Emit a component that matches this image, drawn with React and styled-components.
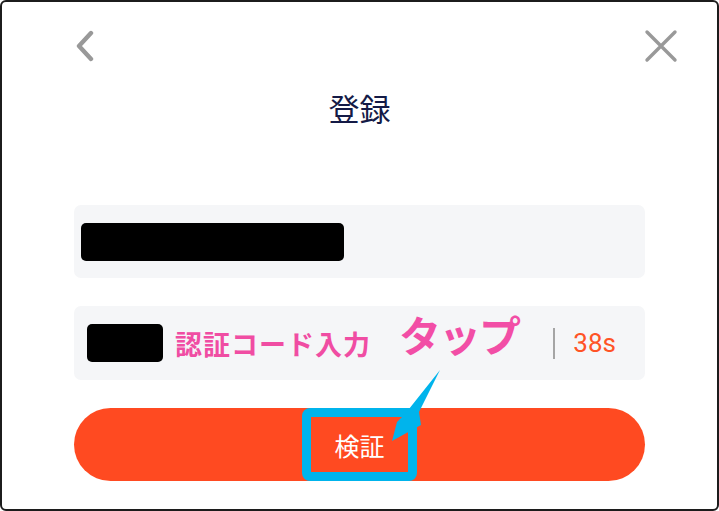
import React from 'react'
import styled, { createGlobalStyle } from 'styled-components'

const GlobalStyle = createGlobalStyle`
    html, body {
        margin: 0;
        padding: 0;
        background: #ffffff;
    }
    body {
        font-family: "Noto Sans CJK JP", "Noto Sans", sans-serif;
    }
`

const Frame = styled.div`
    position: relative;
    width: 719px;
    height: 511px;
    box-sizing: border-box;
    border: 2px solid #1c1c1c;
    border-radius: 6px;
    background: #ffffff;
    overflow: hidden;
`

const Header = styled.header`
    display: flex;
    align-items: center;
    justify-content: space-between;
    height: 32px;
    margin-top: 28px;
    padding: 0 39px 0 71px;
`

const IconButton = styled.button`
    display: flex;
    align-items: center;
    justify-content: center;
    padding: 0;
    border: 0;
    background: none;
    color: #999999;
`

const Title = styled.h1`
    margin: 26px 0 0;
    font-size: 31px;
    line-height: 40px;
    font-weight: 400;
    text-align: center;
    color: #141a46;
`

const Form = styled.section`
    display: flex;
    flex-direction: column;
    gap: 28px;
    margin-top: 77px;
    padding: 0 72px;
`

const Field = styled.div`
    display: flex;
    align-items: center;
    height: ${p => p.$h || 73}px;
    padding: 0 29px 0 ${p => p.$pl || 7}px;
    box-sizing: border-box;
    background: #f5f6f8;
    border-radius: 7px;
`

const Redacted = styled.div`
    width: ${p => p.$w}px;
    height: 38px;
    background: #000;
    border-radius: 5px;
    flex-shrink: 0;
`

const Placeholder = styled.span`
    margin-left: 12px;
    font-size: 27px;
    font-weight: 700;
    letter-spacing: 1px;
    color: #f04da3;
    white-space: nowrap;
`

const TapNote = styled.span`
    margin-left: 28px;
    margin-top: -20px;
    font-size: 42px;
    font-weight: 700;
    color: #f24ea6;
    white-space: nowrap;
    letter-spacing: -2px;
`

const Divider = styled.span`
    margin-left: auto;
    width: 2px;
    height: 31px;
    background: #a5a5a5;
`

const Timer = styled.span`
    margin-left: 18px;
    font-family: Roboto, "Noto Sans", sans-serif;
    font-size: 26px;
    color: #ff5326;
`

const Submit = styled.button`
    display: flex;
    align-items: center;
    justify-content: center;
    height: 73px;
    padding: 0;
    border: 0;
    border-radius: 37px;
    background: #ff4a21;
`

const SubmitLabel = styled.span`
    display: flex;
    align-items: center;
    justify-content: center;
    width: 115px;
    height: 73px;
    box-sizing: border-box;
    border: 9px solid #00b4ec;
    border-radius: 8px;
    font-family: "Noto Sans CJK JP", sans-serif;
    font-size: 25px;
    color: #ffffff;
`

const Callout = styled.svg`
    position: absolute;
    left: 0;
    top: 0;
    pointer-events: none;
`

export default function App() {
    return (
        <>
            <GlobalStyle />
            <Frame>
                <Header>
                    <IconButton aria-label="back">
                        <svg width="22" height="32" viewBox="0 0 22 32">
                            <path d="M18 3 L6 16 L18 29" fill="none" stroke="currentColor" strokeWidth="4.4" strokeLinecap="round" strokeLinejoin="round" />
                        </svg>
                    </IconButton>
                    <IconButton aria-label="close">
                        <svg width="34" height="34" viewBox="0 0 34 34">
                            <path d="M3 3 L31 31 M31 3 L3 31" fill="none" stroke="currentColor" strokeWidth="3.4" strokeLinecap="round" />
                        </svg>
                    </IconButton>
                </Header>
                <Title>登録</Title>
                <Form>
                    <Field>
                        <Redacted $w={263} />
                    </Field>
                    <Field $h={74} $pl={13}>
                        <Redacted $w={76} />
                        <Placeholder>認証コード入力</Placeholder>
                        <TapNote>タップ</TapNote>
                        <Divider />
                        <Timer>38s</Timer>
                    </Field>
                    <Submit>
                        <SubmitLabel>検証</SubmitLabel>
                    </Submit>
                </Form>
                <Callout width="719" height="511" viewBox="0 0 719 511">
                    <polygon points="438,368 417,410 419,423 390,439 395,420 403,412" fill="#00b4ec" />
                </Callout>
            </Frame>
        </>
    )
}
